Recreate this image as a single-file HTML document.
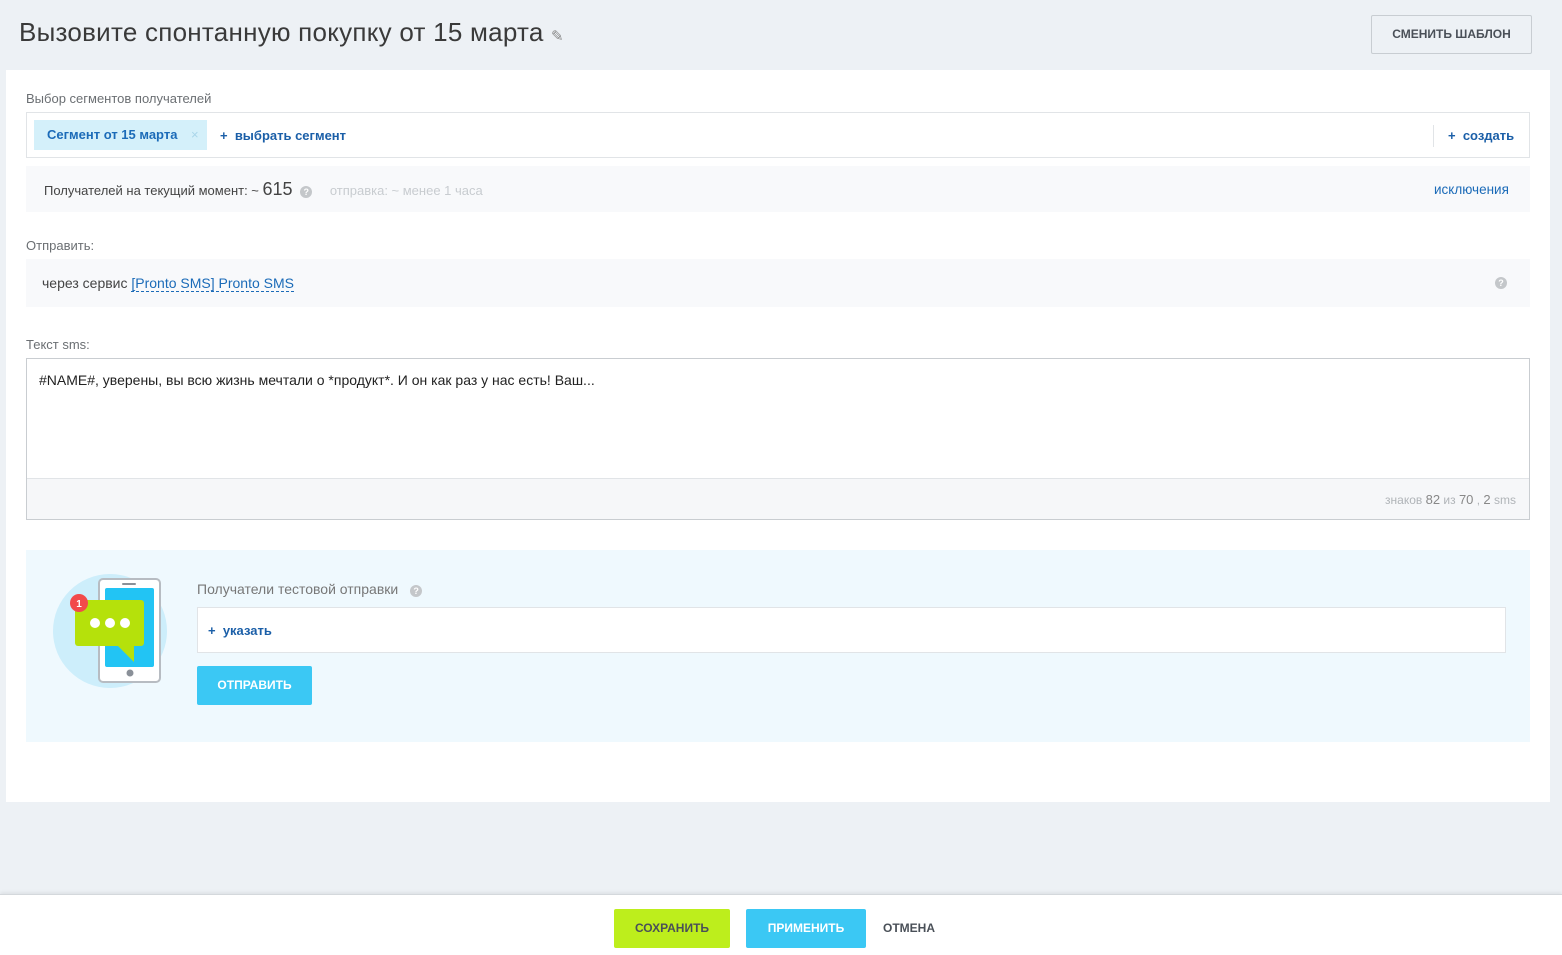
<!DOCTYPE html>
<html><head><meta charset="utf-8"><style>
*{box-sizing:border-box;margin:0;padding:0}
body{width:1562px;height:955px;background:#edf1f5;font-family:"Liberation Sans",sans-serif;position:relative;overflow:hidden;color:#333}
.a{position:absolute}
.lbl{font-size:13px;color:#6b6f73}
.q{display:inline-block;width:12px;height:12px;border-radius:50%;background:#c4c7ca;color:#fff;font-size:9px;font-weight:bold;text-align:center;line-height:12px}
.btn{font-weight:bold;font-size:12px;text-align:center;border-radius:2px}
</style></head><body>
<div class="a" style="left:19px;top:17px;font-size:26px;color:#3a3a3a;letter-spacing:0.25px">Вызовите спонтанную покупку от 15 марта <span style="font-size:15px;color:#888">✎</span></div>
<div class="a btn" style="left:1371px;top:15px;width:161px;height:39px;border:1px solid #c8cdd2;background:#edf1f5;color:#4a5058;line-height:37px">СМЕНИТЬ ШАБЛОН</div>

<div class="a" style="left:6px;top:70px;width:1544px;height:732px;background:#fff"></div>
<div class="a lbl" style="left:26px;top:91px">Выбор сегментов получателей</div>
<div class="a" style="left:26px;top:112px;width:1504px;height:46px;border:1px solid #e1e4e7"></div>
<div class="a" style="left:34px;top:120px;width:173px;height:30px;background:#d4f0fa;color:#1b6bb8;font-size:13px;font-weight:bold;line-height:30px;padding-left:13px">Сегмент от 15 марта <span style="color:#a9d6ea;margin-left:10px;font-weight:normal">×</span></div>
<div class="a" style="left:220px;top:128px;color:#1b5fa8;font-size:13px;font-weight:bold">+&nbsp; выбрать сегмент</div>
<div class="a" style="left:1433px;top:125px;width:1px;height:22px;background:#e1e4e7"></div>
<div class="a" style="left:1448px;top:128px;color:#1b5fa8;font-size:13px;font-weight:bold">+&nbsp; создать</div>

<div class="a" style="left:26px;top:166px;width:1504px;height:46px;background:#f8f9fb"></div>
<div class="a" style="left:44px;top:179px;font-size:13px;color:#444">Получателей на текущий момент: ~ <span style="font-size:18px;color:#444">615</span> <span class="q" style="margin-left:4px">?</span> <span style="color:#c8ccd0;margin-left:14px">отправка: ~ менее 1 часа</span></div>
<div class="a" style="left:1434px;top:182px;font-size:13.5px;color:#1b6bb8">исключения</div>

<div class="a lbl" style="left:26px;top:238px">Отправить:</div>
<div class="a" style="left:26px;top:259px;width:1504px;height:48px;background:#f8f9fb"></div>
<div class="a" style="left:42px;top:275px;font-size:14px;color:#444">через сервис <span style="color:#1b6bb8;border-bottom:1px dashed #1b6bb8">[Pronto SMS] Pronto SMS</span></div>
<div class="a q" style="left:1495px;top:277px">?</div>

<div class="a lbl" style="left:26px;top:337px">Текст sms:</div>
<div class="a" style="left:26px;top:358px;width:1504px;height:162px;border:1px solid #c9cdd1"></div>
<div class="a" style="left:27px;top:478px;width:1502px;height:41px;background:#f6f7f9;border-top:1px solid #e1e4e7"></div>
<div class="a" style="left:39px;top:372px;font-size:14px;color:#222">#NAME#, уверены, вы всю жизнь мечтали о *продукт*. И он как раз у нас есть! Ваш...</div>
<div class="a" style="left:1300px;top:492px;width:216px;text-align:right;font-size:12px;color:#b0b4b8">знаков <span style="font-size:13px;color:#888">82</span> из <span style="font-size:13px;color:#888">70</span> , <span style="font-size:13px;color:#888">2</span> sms</div>

<div class="a" style="left:26px;top:550px;width:1504px;height:192px;background:#eff9fe"></div>
<svg class="a" style="left:50px;top:570px" width="125" height="125" viewBox="0 0 125 125">
<circle cx="60" cy="61" r="57" fill="#cdeefb"/>
<rect x="49" y="9" width="61" height="103" rx="4" fill="#fff" stroke="#b7bcc2" stroke-width="2"/>
<rect x="55" y="18" width="49" height="79" rx="2" fill="#22c4f4"/>
<rect x="72" y="13" width="14" height="2" rx="1" fill="#8a9098"/>
<circle cx="80" cy="103" r="3.5" fill="#8a9098"/>
<rect x="25" y="30" width="69" height="46" rx="3" fill="#b5e10b"/>
<polygon points="68,76 84,76 84,92" fill="#b5e10b"/>
<circle cx="45" cy="53" r="5" fill="#fff"/><circle cx="60" cy="53" r="5" fill="#fff"/><circle cx="75" cy="53" r="5" fill="#fff"/>
<circle cx="29" cy="33" r="9" fill="#f24a4a"/>
<text x="29" y="37" font-size="10" font-weight="bold" fill="#fff" text-anchor="middle" font-family="Liberation Sans">1</text>
</svg>
<div class="a" style="left:197px;top:581px;font-size:14px;color:#777">Получатели тестовой отправки <span class="q" style="margin-left:8px">?</span></div>
<div class="a" style="left:197px;top:607px;width:1309px;height:46px;background:#fff;border:1px solid #e1e4e7"></div>
<div class="a" style="left:208px;top:623px;color:#1b5fa8;font-size:13px;font-weight:bold">+&nbsp; указать</div>
<div class="a btn" style="left:197px;top:666px;width:115px;height:39px;background:#3bc8f4;color:#fff;line-height:39px">ОТПРАВИТЬ</div>

<div class="a" style="left:0;top:894px;width:1562px;height:61px;background:#fff;border-top:1px solid #d4d8dc;box-shadow:0 -2px 3px rgba(0,0,0,0.06)"></div>
<div class="a btn" style="left:614px;top:909px;width:116px;height:39px;background:#bdee1c;color:#4a5058;line-height:39px">СОХРАНИТЬ</div>
<div class="a btn" style="left:746px;top:909px;width:120px;height:39px;background:#3bc8f4;color:#fff;line-height:39px">ПРИМЕНИТЬ</div>
<div class="a btn" style="left:876px;top:909px;width:66px;height:39px;color:#4a5058;line-height:39px">ОТМЕНА</div>
</body></html>
